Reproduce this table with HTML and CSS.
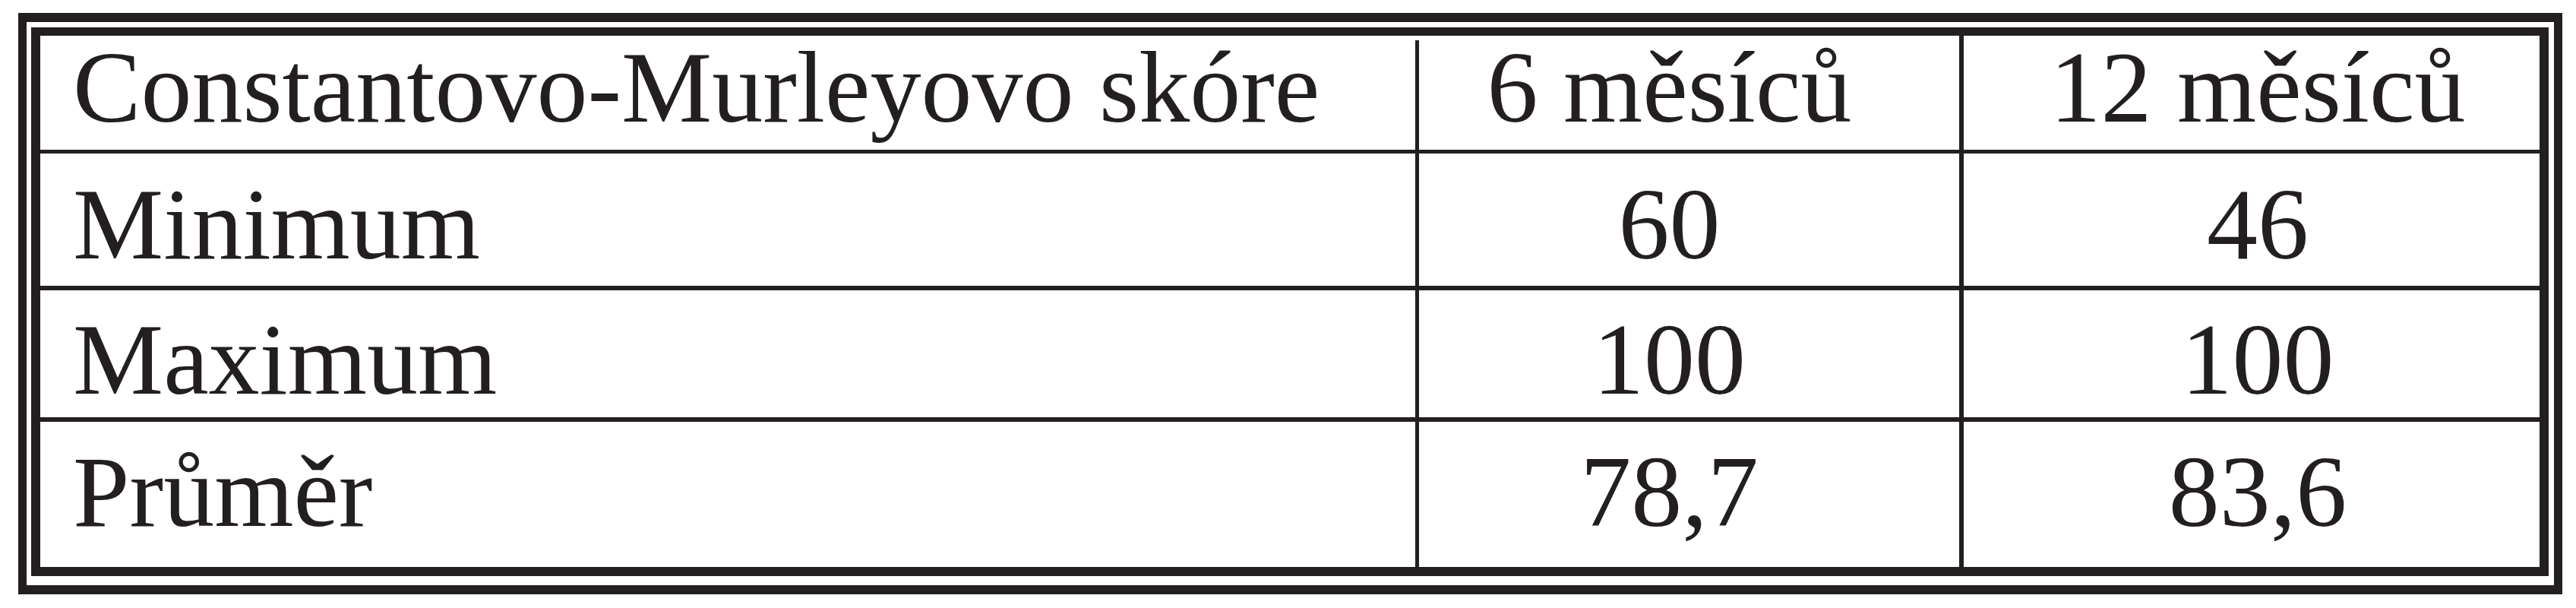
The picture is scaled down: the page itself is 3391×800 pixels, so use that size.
FILE: index.html
```html
<!DOCTYPE html>
<html lang="cs">
<head>
<meta charset="utf-8">
<title>Constantovo-Murleyovo skóre</title>
<link rel="stylesheet" href="styles.css">
</head>
<body>
<div class="frame">
  <div class="inner">
    <table class="score">
      <colgroup>
        <col class="c1">
        <col class="c2">
        <col class="c3">
      </colgroup>
      <tr class="r1">
        <td class="label head-label">Constantovo-Murleyovo skóre</td>
        <td class="v6">6 měsíců</td>
        <td class="v12">12 měsíců</td>
      </tr>
      <tr class="r2">
        <td class="label">Minimum</td>
        <td class="v6">60</td>
        <td class="v12">46</td>
      </tr>
      <tr class="r3">
        <td class="label">Maximum</td>
        <td class="v6">100</td>
        <td class="v12">100</td>
      </tr>
      <tr class="r4">
        <td class="label">Průměr</td>
        <td class="v6">78,7</td>
        <td class="v12">83,6</td>
      </tr>
    </table>
  </div>
</div>
</body>
</html>
```

FILE: styles.css
```css
html, body {
  margin: 0;
  padding: 0;
  background: #ffffff;
}

body {
  font-family: "Liberation Serif", "Times New Roman", serif;
  color: #231f20;
}

.frame {
  margin: 17px 0 0 24px;
  width: 3349px;
  box-sizing: border-box;
  border-style: solid;
  border-color: #231f20;
  border-width: 12px 11px 12px 11px;
  padding: 7px 7px 12px 6px;
}

.inner {
  border-style: solid;
  border-color: #231f20;
  border-width: 11px 12px 12px 12px;
}

.score {
  width: 3290px;
  table-layout: fixed;
  border-collapse: separate;
  border-spacing: 0;
  font-size: 134px;
  line-height: 134px;
}

.c1 { width: 1815px; }
.c2 { width: 717px; }
.c3 { width: 758px; }

.score td {
  box-sizing: border-box;
  vertical-align: top;
  white-space: nowrap;
  padding-top: 0;
  padding-bottom: 0;
  border: 0 solid #231f20;
}

.label {
  text-align: left;
  padding-left: 43px;
  border-right-width: 5px !important;
}

.head-label {
  border-right-width: 0 !important;
  background-image: linear-gradient(#231f20, #231f20);
  background-repeat: no-repeat;
  background-position: right bottom;
  background-size: 5px calc(100% - 6px);
}

.v6 {
  text-align: center;
  padding-right: 52px;
  padding-left: 0;
  border-right-width: 6px !important;
}

.v12 {
  text-align: center;
  padding-left: 16px;
  padding-right: 0;
}

.r1 td {
  height: 155px;
  padding-top: 1px;
  border-bottom-width: 5px;
}

.r2 td {
  height: 180px;
  padding-top: 26px;
  border-bottom-width: 6px;
}

.r3 td {
  height: 173px;
  padding-top: 24px;
  border-bottom-width: 6px;
}

.r4 td {
  height: 191px;
  padding-top: 25px;
}
```
